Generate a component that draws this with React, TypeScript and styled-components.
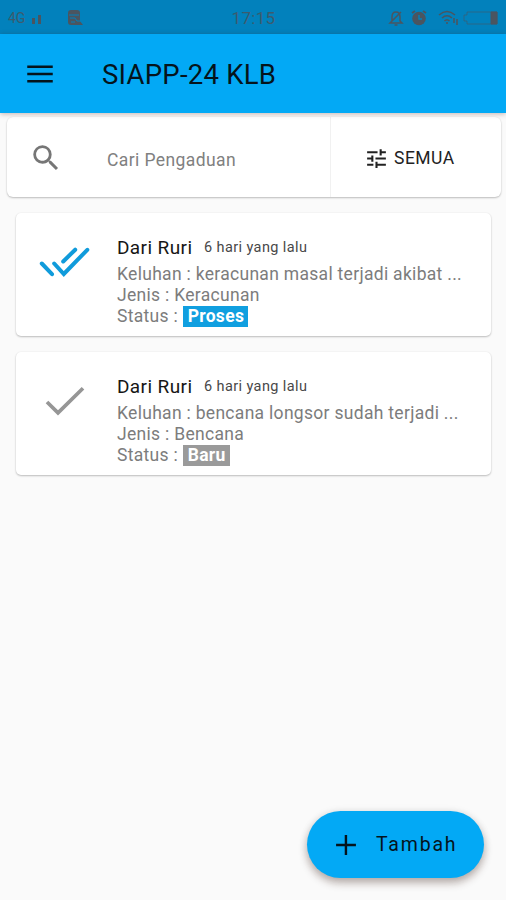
import React from "react";
import styled, { createGlobalStyle } from "styled-components";

const Global = createGlobalStyle`
  * { box-sizing: border-box; }
  body { margin: 0; background: #fafafa; font-family: Roboto, "Liberation Sans", sans-serif; }
`;

const Screen = styled.div`
  position: relative;
  width: 506px;
  height: 900px;
  overflow: hidden;
  background: #fafafa;
  display: flex;
  flex-direction: column;
`;

const StatusBar = styled.div`
  flex: none;
  height: 34px;
  display: grid;
  grid-template-columns: 1fr auto 1fr;
  align-items: center;
  padding: 0 7px 0 8px;
  background: #0281bc;
  color: #3c5b6e;
`;

const StatusGroup = styled.div<{ $end?: boolean }>`
  display: flex;
  align-items: center;
  justify-content: ${(p) => (p.$end ? "flex-end" : "flex-start")};
`;

const Glyph = styled.svg<{ $gap?: number }>`
  display: block;
  flex: none;
  margin-left: ${(p) => p.$gap ?? 0}px;
  color: #4a5560;
`;

const Network = styled.span`
  width: 23px;
  font-size: 14px;
  line-height: 18px;
`;

const Clock = styled.span`
  font-size: 17px;
  line-height: 34px;
  letter-spacing: 0.3px;
  padding-top: 1px;
`;

const AppBar = styled.header`
  position: relative;
  z-index: 1;
  flex: none;
  height: 79px;
  display: flex;
  align-items: center;
  padding: 0 23px;
  background: #03a9f5;
  color: #05141c;
  box-shadow: 0 1px 5px rgba(70, 20, 10, 0.3);
`;

const Title = styled.h1`
  margin: 2px 0 0 45px;
  font-size: 27.5px;
  line-height: 34px;
  font-weight: 400;
  letter-spacing: 0.25px;
  white-space: nowrap;
`;

const Icon = styled.svg<{ $size: number }>`
  display: block;
  flex: none;
  width: ${(p) => p.$size}px;
  height: ${(p) => p.$size}px;
  fill: currentColor;
`;

const cardShadow = "0 1px 2px rgba(0, 0, 0, 0.24), 0 0 2px rgba(0, 0, 0, 0.06)";

const SearchCard = styled.div`
  flex: none;
  height: 80px;
  margin: 4px 5px 0 7px;
  display: flex;
  background: #fff;
  border-radius: 6px;
  box-shadow: ${cardShadow};
`;

const SearchField = styled.div`
  width: 324px;
  display: flex;
  align-items: center;
  padding: 2px 0 0 22px;
  color: #767676;
  border-right: 1px solid #f1f1f1;
`;

const Placeholder = styled.span`
  margin: 3px 0 0 44px;
  font-size: 17.5px;
  letter-spacing: 0.4px;
  color: #808080;
`;

const Filter = styled.div`
  flex: 1;
  display: flex;
  align-items: center;
  gap: 5px;
  padding: 2px 0 0 33px;
  font-size: 17.5px;
  letter-spacing: 0.5px;
  color: #222;
`;

const List = styled.main`
  display: flex;
  flex-direction: column;
  gap: 16px;
  padding: 16px 15px 0 16px;
`;

const Card = styled.article`
  height: 123px;
  display: flex;
  background: #fff;
  border-radius: 5px;
  box-shadow: ${cardShadow};
`;

const Mark = styled.svg`
  display: block;
  flex: none;
  width: 101px;
  height: 100px;
  fill: none;
`;

const Details = styled.div`
  padding-top: 23px;
  font-size: 17.5px;
  line-height: 21px;
  letter-spacing: 0.3px;
  color: #7c7c7c;
  white-space: nowrap;
`;

const Heading = styled.div`
  display: flex;
  align-items: center;
  height: 22px;
  margin-bottom: 6px;
`;

const Name = styled.span`
  width: 87px;
  font-size: 19px;
  letter-spacing: 0.4px;
  color: #161616;
`;

const Age = styled.span`
  font-size: 14.5px;
  letter-spacing: 0.4px;
  color: #484848;
`;

const Line = styled.div`
  height: 21px;
`;

const Badge = styled.span<{ $color: string }>`
  display: inline-block;
  height: 21px;
  padding: 0 4px 0 5px;
  background: ${(p) => p.$color};
  color: #fff;
  font-weight: 700;
  letter-spacing: 0.3px;
`;

const Fab = styled.button`
  position: absolute;
  left: 307px;
  top: 811px;
  width: 177px;
  height: 67px;
  border: 0;
  border-radius: 34px;
  display: flex;
  align-items: center;
  gap: 13px;
  padding: 0 0 0 22px;
  background: #03a9f5;
  color: #05141c;
  font-family: inherit;
  font-size: 19.5px;
  letter-spacing: 1.8px;
  box-shadow: 0 5px 9px rgba(50, 20, 10, 0.3), 0 1px 8px rgba(0, 0, 0, 0.1);
`;

const DoneAll = () => (
  <Mark viewBox="0 0 101 100" stroke="#109bdb" strokeWidth="4" strokeLinecap="round">
    <path d="M25.8 50.5 36 61.2M59.2 36.7 47.2 48.5" />
    <path d="M38.2 50.5 47.8 61 71.3 36.8" />
  </Mark>
);

const Done = () => (
  <Mark viewBox="0 0 101 100" stroke="#969696" strokeWidth="3.7">
    <path d="M31 50 42 60.8 67 36.3" />
  </Mark>
);

const reports = [
  { text: "keracunan masal terjadi akibat ...", kind: "Keracunan", status: "Proses", color: "#109fe0", done: true },
  { text: "bencana longsor sudah terjadi ...", kind: "Bencana", status: "Baru", color: "#9a9a9a", done: false },
];

export default function App() {
  return (
    <>
      <Global />
      <Screen>
        <StatusBar>
          <StatusGroup>
            <Network>4G</Network>
            <Glyph width="10" height="14" fill="currentColor">
              <path d="M1 7h3v6H1zM7 4h3v9H7z" />
            </Glyph>
            <Glyph $gap={25} width="18" height="18" viewBox="0 0 18 18" fill="currentColor">
              <path d="M2 4Q2 1 5 1H11Q14 1 14 4V12L17 16H5Q2 16 2 13Z" />
              <path d="M3 6H13M4 9H9L11 12H15M5 13H9" stroke="#0281bc" fill="none" />
            </Glyph>
          </StatusGroup>
          <Clock>17:15</Clock>
          <StatusGroup $end>
            <Glyph width="16" height="18" viewBox="0 0 16 18" fill="none" stroke="currentColor" strokeWidth="1.5">
              <path d="M4 12V8Q4 3 8 3Q12 3 12 8V12L14 14H2ZM6.5 16H9.5M2 14 13 3" />
            </Glyph>
            <Glyph $gap={6} width="18" height="18" viewBox="0 0 18 18" fill="none">
              <circle cx="9" cy="9.5" r="6.8" fill="currentColor" />
              <path d="M2 4 5 2M16 4 13 2" stroke="currentColor" strokeWidth="2" />
              <path d="M9 6V10H12" stroke="#0281bc" strokeWidth="1.4" />
            </Glyph>
            <Glyph $gap={10} width="21" height="18" viewBox="0 0 21 18" fill="none" stroke="currentColor" strokeWidth="1.6">
              <path d="M1 6Q9 -1 17 6M4 9Q9 4.5 14 9M6.5 12Q9 9.5 11.5 12" />
              <path d="M9 13V15M16 9V14M19 10V16" />
            </Glyph>
            <Glyph $gap={4} width="36" height="14" viewBox="0 0 36 14" fill="none" stroke="currentColor">
              <path d="M4 1H34V13H4V10H1V4H4Z" strokeOpacity=".55" />
              <path d="M28 1H34V13H28Z" fill="currentColor" />
            </Glyph>
          </StatusGroup>
        </StatusBar>
        <AppBar>
          <Icon $size={34} viewBox="0 0 24 24">
            <path d="M3 18h18v-1.8H3v1.8zm0-5.1h18v-1.8H3v1.8zm0-6.9v1.8h18V6H3z" />
          </Icon>
          <Title>SIAPP-24 KLB</Title>
        </AppBar>
        <SearchCard>
          <SearchField>
            <Icon $size={34} viewBox="0 0 24 24">
              <path d="M15.5 14h-.79l-.28-.27A6.471 6.471 0 0 0 16 9.5 6.5 6.5 0 1 0 9.5 16c1.61 0 3.09-.59 4.23-1.57l.27.28v.79l5 4.99L20.49 19l-4.99-5zm-6 0C7.01 14 5 11.99 5 9.5S7.01 5 9.5 5 14 7.01 14 9.5 11.99 14 9.5 14z" />
            </Icon>
            <Placeholder>Cari Pengaduan</Placeholder>
          </SearchField>
          <Filter>
            <Icon $size={25} viewBox="0 0 24 24">
              <path d="M3 17v2h6v-2H3zM3 5v2h10V5H3zm10 16v-2h8v-2h-8v-2h-2v6h2zM7 9v2H3v2h4v2h2V9H7zm14 4v-2H11v2h10zm-6-4h2V7h4V5h-4V3h-2v6z" />
            </Icon>
            <span>SEMUA</span>
          </Filter>
        </SearchCard>
        <List>
          {reports.map((r) => (
            <Card key={r.status}>
              {r.done ? <DoneAll /> : <Done />}
              <Details>
                <Heading>
                  <Name>Dari Ruri</Name>
                  <Age>6 hari yang lalu</Age>
                </Heading>
                <Line>Keluhan : {r.text}</Line>
                <Line>Jenis : {r.kind}</Line>
                <Line>
                  Status : <Badge $color={r.color}>{r.status}</Badge>
                </Line>
              </Details>
            </Card>
          ))}
        </List>
        <Fab>
          <Icon $size={34} viewBox="0 0 24 24">
            <path d="M19 12.8h-6.2V19h-1.7v-6.2H5v-1.7h6.1V5h1.7v6.1H19z" />
          </Icon>
          <span>Tambah</span>
        </Fab>
      </Screen>
    </>
  );
}
